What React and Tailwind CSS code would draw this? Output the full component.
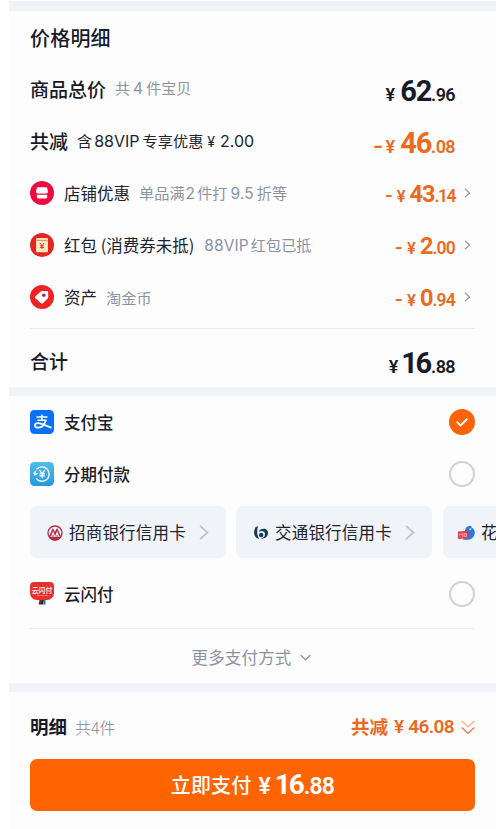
import React from "react";

const CJK = "font-['Noto_Sans_CJK_SC',sans-serif]";
const NUM = "font-['Roboto','Noto_Sans_CJK_SC',sans-serif]";

function Band() {
  return <div className="h-[9px] shrink-0 bg-[#f0f3f7]" />;
}

function Price({ minus, whole, cents, large, wholeClass = "", centsClass = "" }) {
  return (
    <span className={`flex items-baseline leading-none ${NUM} ${large ? "pt-[5px]" : "pt-[3px]"}`}>
      {minus && <span className={large ? "mr-[5px] w-[8px] origin-left scale-x-125 text-[21px] font-bold" : "mr-[5px] w-[7px] origin-left scale-x-110 text-[19px] font-semibold"}>-</span>}
      <span className={large ? "mr-[5px] text-[18px] font-semibold" : "mr-[4px] text-[16.5px] font-semibold"}>¥</span>
      <span className={`font-bold ${large ? "text-[29px]" : "text-[23.5px]"} ${wholeClass || (large ? "tracking-[-1.2px]" : "tracking-[-1px]")}`}>{whole}</span>
      <span className={`font-semibold ${large ? "text-[18px]" : "text-[17.5px]"} ${centsClass || (large ? "tracking-[-0.6px]" : "tracking-[-0.8px]")}`}>.{cents}</span>
    </span>
  );
}

function Mixed({ text }) {
  return text.split(/([0-9A-Z.]+)/).map((run, i) =>
    /[0-9A-Z]/.test(run) ? (
      <span key={i} className={`font-['Inter',sans-serif] text-[15.5px] tracking-[0.1px] ${i > 1 || text[0] === "共" ? "mx-[3px]" : "mr-[2px] ml-px"}`}>{run}</span>
    ) : (
      <span key={i}>{run}</span>
    )
  );
}

function Chevron({ className }) {
  return (
    <svg className={className} viewBox="0 0 8 12" fill="none" stroke="currentColor" strokeWidth="1.3">
      <path d="M1 1l5.5 5L1 11" />
    </svg>
  );
}

function DiscountRow({ icon, title, note, whole, cents, centsClass }) {
  return (
    <div className="flex h-[52px] items-center">
      {icon}
      <span className="ml-[10px] text-[16.5px] text-[#20232f]">{title}</span>
      <span className="ml-[9px] text-[15.2px] text-[#8b93a3]"><Mixed text={note} /></span>
      <span className="ml-auto flex items-center text-[#ea6a1e]">
        <Price minus whole={whole} cents={cents} centsClass={centsClass} />
        <Chevron className="mr-[4px] ml-[9px] h-[10px] w-[7px] text-[#858b98]" />
      </span>
    </div>
  );
}

function ShopIcon() {
  return (
    <svg className="size-6" viewBox="0 0 24 24">
      <circle cx="12" cy="12" r="12" fill="#ed0b3f" />
      <path d="M7.800 6.300h8.400q.8 0 1 .8l.7 3.200c.2 1.500-.7 2.200-1.900 2.200H8c-1.200 0-2.100-.7-1.900-2.200l.7-3.200q.2-.8 1-.8z" fill="#fff" />
      <path d="M6.800 13.800h10.400v2.300q0 1.500-1.500 1.500H8.300q-1.500 0-1.500-1.500z" fill="#fff" />
    </svg>
  );
}

function RedPacketIcon() {
  return (
    <svg className="size-6" viewBox="0 0 24 24">
      <circle cx="12" cy="12" r="12" fill="#e52620" />
      <rect x="6" y="5" width="12" height="14.200" rx="1.200" fill="#ffe6c0" />
      <path d="M6.500 7.400h11" stroke="#e8765a" strokeWidth=".9" />
      <path d="M10 10l2 2.800L14 10M12 12.800V16M10.200 12.900h3.600M10.200 14.500h3.600" stroke="#d9382b" strokeWidth="1" fill="none" />
    </svg>
  );
}

function TagIcon() {
  return (
    <svg className="size-6" viewBox="0 0 24 24">
      <circle cx="12" cy="12" r="12" fill="#ee2424" />
      <path d="M12 6h4.800q1.400 0 1.400 1.400v4.800q0 .7-.5 1.200l-4.800 4.800q-1 .9-1.900 0l-5.600-5q-1-1 0-1.900l5.400-4.800Q11.300 6 12 6z" fill="#fff" />
      <circle cx="13.800" cy="10.300" r="1.800" fill="#b82645" />
    </svg>
  );
}

function AlipayIcon() {
  return (
    <svg className="size-6" viewBox="0 0 24 24" fill="none" stroke="#fff">
      <rect width="24" height="24" rx="4.500" fill="#0a70f5" stroke="none" />
      <path d="M12 4.600v5.500M6.500 7.100h11M7.300 10.200h9.200" strokeWidth="1.500" />
      <path d="M15.800 10.200c-1.200 4-3.800 7.400-7.400 7.400-2.200 0-3.500-.9-3.500-2.200 0-1.400 1.400-2.300 3.200-2.300 3.600 0 7.400 2.900 13.400 4.600" strokeWidth="1.800" />
    </svg>
  );
}

function InstallmentIcon() {
  return (
    <svg className="size-6" viewBox="0 0 24 24" fill="none" stroke="#fff">
      <defs>
        <linearGradient id="sky" x1="0" y1="0" x2="0" y2="1">
          <stop stopColor="#52bce8" />
          <stop offset="1" stopColor="#2599df" />
        </linearGradient>
      </defs>
      <rect width="24" height="24" rx="4.500" fill="url(#sky)" stroke="none" />
      <path d="M6.600 7.300a7.200 7.200 0 1 1-.4 9.100M5 12c0-1.200.3-2.400.8-3.300" strokeWidth="1.400" />
      <path d="M3.600 10.500L5 12.800l2.600-1.600" strokeWidth="1.200" />
      <path d="M9.500 8.200l2.700 3.500 2.700-3.500M12.200 11.700v4.500M9.500 11.800h5.400M9.500 13.900h5.400" strokeWidth="1.200" />
    </svg>
  );
}

function QuickPassIcon() {
  return (
    <span className="flex h-6 w-6 flex-col items-center">
      <span className="flex h-[18px] w-6 shrink-0 flex-col items-center justify-center rounded-[4px] rounded-b-[7px] bg-[#e5322d] text-white">
        <span className="text-[6.8px] leading-[8px] font-medium whitespace-nowrap">云闪付</span>
        <span className="mt-[1px] h-[1px] w-[11px] bg-[#ef7773]" />
      </span>
      <svg className="h-[5px] w-[8px] shrink-0" viewBox="0 0 8 5">
        <path d="M1.500 0h2.500L3 4.500H.5z" fill="#8c2430" />
        <path d="M3.500 0H6L5 4.500H2.500z" fill="#18334e" />
        <path d="M6 0h1.500v4.500H5z" fill="#168d80" />
      </svg>
    </span>
  );
}

function MerchantsIcon() {
  return (
    <svg className="size-[16px] shrink-0" viewBox="0 0 16 16" fill="none">
      <circle cx="8" cy="8" r="7" stroke="#b72a43" strokeWidth="1.300" />
      <path d="M2 11.500L5.800 3l2 3.800L10.200 3 14 11.500z" fill="#b72a43" />
      <path d="M4.600 11.500l1.500-4 1.500 4M8.600 11.500l1.500-4 1.500 4" stroke="#f1f3f6" strokeWidth="1.100" />
      <path d="M2 12h12a7 7 0 0 1-12 0z" fill="#b72a43" />
    </svg>
  );
}

function CommunicationsIcon() {
  return (
    <svg className="size-[16px] shrink-0" viewBox="0 0 16 16" fill="none">
      <path d="M5 1L2.500 2.300C.3 6 .6 10.200 3.500 13l2.700.9C3.800 10.200 3.700 5.700 5 1z" fill="#173a60" />
      <path d="M5.500 7C7.800 2.200 15.300 2.800 15 8.300c-.2 3.700-3.700 5.700-6.800 5.300 2.800-1 4-2.800 3.800-4.800C11.700 5.900 8 5.300 5.500 7z" fill="#173a60" />
      <circle cx="8.200" cy="10" r="2.200" fill="#173a60" />
    </svg>
  );
}

function HuabeiIcon() {
  return (
    <svg className="h-[16px] w-[17px] shrink-0" viewBox="0 0 17 16">
      <path d="M7.500 3.500C9 1 11 1.300 13 .8l.8 1.900C16.500 4 17.500 7 16.300 10c-1.200 3.500-4 4.800-7 4.700H5z" fill="#2878dd" />
      <circle cx="12.300" cy="4.200" r="1" fill="#dceaff" />
      <path d="M0 6.500l10.500-.8V13L0 14z" fill="#df3f50" />
      <path d="M2 8.500v3M1.500 9.500h3M4.500 8v4M6 8.500h2.500v3H6zM6 10h2.500" fill="none" stroke="#f6b2b8" strokeWidth=".7" />
    </svg>
  );
}

function BankCard({ icon, name, className, more = true }) {
  return (
    <div className={`flex h-[52px] shrink-0 items-center rounded-[7px] bg-[#f0f3f7] pt-px ${className}`}>
      {icon}
      <span className="ml-[6px] text-[16.5px] tracking-[0.2px] whitespace-nowrap text-[#20232f]">{name}</span>
      {more && (
        <svg className="mr-[17px] ml-auto h-[15px] w-[10px]" viewBox="0 0 10 15" fill="none" stroke="#bec2ca" strokeWidth="1.700">
          <path d="M1 .8l7.500 6.700L1 14.200" />
        </svg>
      )}
    </div>
  );
}

function PayRow({ icon, name, selected }) {
  return (
    <div className="flex h-[52px] items-center px-[21px]">
      {icon}
      <span className="ml-[10px] text-[16.5px] font-medium text-[#1b1e2a]">{name}</span>
      {selected ? (
        <span className="ml-auto flex size-[26px] items-center justify-center rounded-full bg-[#fd6204]">
          <svg className="h-[9px] w-[12px]" viewBox="0 0 12 9" fill="none" stroke="#fff" strokeWidth="1.900" strokeLinecap="round" strokeLinejoin="round">
            <path d="M1.200 4.200L4.500 7.500 10.800 1.300" />
          </svg>
        </span>
      ) : (
        <span className="ml-auto size-[26px] rounded-full border-2 border-[#cfd1d9]" />
      )}
    </div>
  );
}

export default function App() {
  return (
    <main className={`h-[829px] w-[496px] overflow-hidden bg-white pt-[1px] pl-[9px] text-[#171a27] ${CJK}`}>
      <div className="flex h-[828px] flex-col bg-[#fdfdfe] whitespace-nowrap">
        <div className="h-[10px] shrink-0 bg-[#f0f3f7]" />
        <section className="h-[376px] px-[21px]">
          <h1 className="flex h-[52px] items-center pt-[2px] text-[20px] font-medium tracking-[0.2px]">价格明细</h1>
          <div className="flex h-[52px] items-center">
            <span className="text-[19px] font-medium">商品总价</span>
            <span className="ml-[9px] text-[15px] text-[#8b93a3]"><Mixed text="共4件宝贝" /></span>
            <span className="mr-[20px] ml-auto"><Price large whole="62" cents="96" /></span>
          </div>
          <div className="flex h-[52px] items-center">
            <span className="text-[19px] font-medium">共减</span>
            <span className="ml-[9px] flex items-baseline text-[15.200px] text-[#20232f]">
              含
              <span className="mr-[3px] ml-[2px] font-['Inter',sans-serif] text-[16px]">88VIP</span>
              专享优惠
              <span className="ml-[4px] font-['Inter',sans-serif] text-[14px]">¥</span>
              <span className="ml-[5px] font-['Inter',sans-serif] text-[16px]">2.00</span>
            </span>
            <span className="mr-[20px] ml-auto text-[#ea6a1e]"><Price large minus whole="46" cents="08" /></span>
          </div>
          <DiscountRow icon={<ShopIcon />} title="店铺优惠" note="单品满2件打9.5折等" whole="43" cents="14" centsClass="tracking-[-1.500px]" />
          <DiscountRow icon={<RedPacketIcon />} title="红包 (消费券未抵)" note="88VIP红包已抵" whole="2" cents="00" />
          <DiscountRow icon={<TagIcon />} title="资产" note="淘金币" whole="0" cents="94" />
          <div className="mt-[5px] h-px bg-[#e9ebef]" />
          <div className="flex h-[58px] items-center pt-[6px]">
            <span className="text-[19px] font-medium">合计</span>
            <span className="mr-[20px] ml-auto"><Price large whole="16" cents="88" wholeClass="-ml-[2px] tracking-[-2.500px] mr-[1.500px]" /></span>
          </div>
        </section>
        <Band />
        <section className="h-[287px]">
          <PayRow icon={<AlipayIcon />} name="支付宝" selected />
          <PayRow icon={<InstallmentIcon />} name="分期付款" />
          <div className="mt-[6px] mb-[10px] flex gap-[10px] overflow-hidden pl-[21px]">
            <BankCard icon={<MerchantsIcon />} name="招商银行信用卡" className="w-[196px] pl-[17px]" />
            <BankCard icon={<CommunicationsIcon />} name="交通银行信用卡" className="w-[196px] pl-[17px]" />
            <BankCard icon={<HuabeiIcon />} name="花" className="ml-px w-[120px] pl-[15px]" more={false} />
          </div>
          <PayRow icon={<QuickPassIcon />} name="云闪付" />
          <div className="mx-[21px] mt-[8px] h-px bg-[#e9ebef]" />
          <div className="flex h-[54px] items-center justify-center pt-[2px] pr-[2px] text-[16.5px] tracking-[0.15px] text-[#8b93a3]">
            更多支付方式
            <svg className="ml-[9px] h-[7px] w-[11px]" viewBox="0 0 11 7" fill="none" stroke="currentColor" strokeWidth="1.300">
              <path d="M.7 1l4.800 4.800L10.300 1" />
            </svg>
          </div>
        </section>
        <Band />
        <section className="px-[21px]">
          <div className="flex h-[67px] items-center pt-[3px]">
            <span className="text-[18.5px] font-bold">明细</span>
            <span className="ml-[8px] text-[16px] font-light text-[#7e8797]">共4件</span>
            <span className="ml-auto flex items-center text-[#ea6a1e]">
              <span className="text-[18.500px] font-bold">共减</span>
              <span className={`ml-[6px] text-[19px] font-semibold ${NUM}`}>¥</span>
              <span className={`ml-[4px] text-[19px] font-semibold tracking-[-0.600px] ${NUM}`}>46.08</span>
              <svg className="ml-[7px] h-[15px] w-[14px]" viewBox="0 0 14 15" fill="none" strokeWidth="1.400">
                <path d="M.7 1L7 6.800 13.300 1" stroke="#f4b99b" />
                <path d="M.7 7.500L7 13.300l6.300-5.800" stroke="#dd855b" />
              </svg>
            </span>
          </div>
          <button className="flex h-[52px] w-full items-center justify-center rounded-[7px] bg-[#ff6402] text-white">
            <span className="text-[20px] font-medium tracking-[0.15px]">立即支付</span>
            <span className={`ml-[7px] flex items-baseline ${NUM}`}>
              <span className="text-[23px] font-semibold">¥</span>
              <span className="ml-[4px] text-[28px] font-bold tracking-[-2px]">16</span>
              <span className="ml-px text-[23px] font-semibold tracking-[-0.800px]">.88</span>
            </span>
          </button>
        </section>
      </div>
    </main>
  );
}
